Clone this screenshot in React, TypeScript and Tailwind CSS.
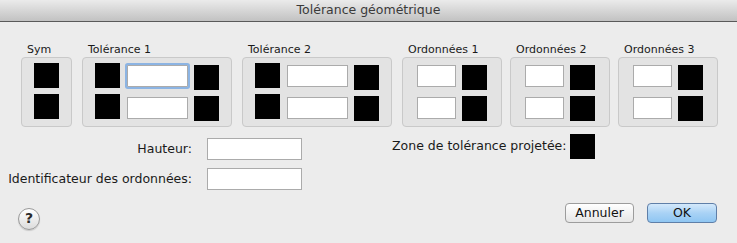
import React from "react"

const font = { fontFamily: '"DejaVu Sans", "Liberation Sans", sans-serif' }

function Swatch({ className = "" }: { className?: string }) {
  return <div className={"w-[25px] h-[25px] bg-black " + className} />
}

function Field({ w, focused = false }: { w: string; focused?: boolean }) {
  return (
    <div
      className={
        "h-[22px] bg-white border border-[#ababab] " +
        w +
        (focused ? " shadow-[0_0_0_2px_#8cb4e3] border-[#7a9cc8] rounded-[1px]" : "")
      }
    />
  )
}

function Group({
  label,
  width,
  children,
}: {
  label: string
  width: string
  children: React.ReactNode
}) {
  return (
    <div className={"flex flex-col " + width}>
      <div className="h-[15px] pl-[6px] text-[11px] leading-[15px] text-[#1a1a1a] whitespace-nowrap">{label}</div>
      <div className="h-[70px] flex bg-[#e3e3e3] border border-[#c9c9c9] rounded-[4px]">
        {children}
      </div>
    </div>
  )
}

function SwatchCol({ pt, className = "" }: { pt: string; className?: string }) {
  return (
    <div className={"flex flex-col gap-[6px] " + pt + " " + className}>
      <Swatch />
      <Swatch />
    </div>
  )
}

function FieldCol({ w, className = "", focusFirst = false }: { w: string; className?: string; focusFirst?: boolean }) {
  return (
    <div className={"flex flex-col gap-[10px] pt-[7px] " + className}>
      <Field w={w} focused={focusFirst} />
      <Field w={w} />
    </div>
  )
}

export default function App() {
  return (
    <div className="w-[737px] h-[243px] bg-[#ececec] flex flex-col overflow-hidden" style={font}>
      <div className="h-[22px] shrink-0 flex items-center justify-center bg-gradient-to-b from-[#ebebeb] to-[#c2c2c2] border-b border-[#5a5a5a] text-[12.5px] text-[#3a3a3a]">
        Tolérance géométrique
      </div>

      <div className="flex pl-[21px] pt-[20px]">
        <Group label="Sym" width="w-[51px]">
          <SwatchCol pt="pt-[5px]" className="ml-[12px]" />
        </Group>
        <div className="w-[10px]" />
        <Group label="Tolérance 1" width="w-[150px]">
          <SwatchCol pt="pt-[5px]" className="ml-[12px]" />
          <FieldCol w="w-[61px]" className="ml-[7px]" focusFirst />
          <SwatchCol pt="pt-[7px]" className="ml-[6px]" />
        </Group>
        <div className="w-[10px]" />
        <Group label="Tolérance 2" width="w-[150px]">
          <SwatchCol pt="pt-[5px]" className="ml-[12px]" />
          <FieldCol w="w-[61px]" className="ml-[7px]" />
          <SwatchCol pt="pt-[7px]" className="ml-[6px]" />
        </Group>
        <div className="w-[10px]" />
        <div className="flex gap-[8px]">
          {["Ordonnées 1", "Ordonnées 2", "Ordonnées 3"].map((l) => (
            <Group key={l} label={l} width="w-[100px]">
              <FieldCol w="w-[39px]" className="ml-[14px]" />
              <SwatchCol pt="pt-[7px]" className="ml-[6px]" />
            </Group>
          ))}
        </div>
      </div>

      <div className="flex pt-[7px]">
        <div className="flex flex-col gap-[8px] pt-[4px]">
          <div className="flex items-center">
            <div className="w-[192px] text-right text-[12.5px] text-[#1a1a1a]">Hauteur:</div>
            <div className="ml-[15px]">
              <Field w="w-[95px]" />
            </div>
          </div>
          <div className="flex items-center">
            <div className="w-[192px] text-right text-[12.5px] text-[#1a1a1a] whitespace-nowrap">
              Identificateur des ordonnées:
            </div>
            <div className="ml-[15px]">
              <Field w="w-[95px]" />
            </div>
          </div>
        </div>
        <div className="flex items-center h-[25px] ml-[90px]">
          <div className="text-[12.5px] text-[#1a1a1a] whitespace-nowrap">Zone de tolérance projetée:</div>
          <Swatch className="ml-[4px]" />
        </div>
      </div>

      <div className="flex items-center pl-[18px] pr-[20px] mt-auto mb-[9px]">
        <div className="w-[22px] h-[22px] rounded-full border border-[#9a9a9a] bg-gradient-to-b from-white to-[#dcdcdc] flex items-center justify-center text-[14px] font-bold text-[#2a2a2a] shadow-[0_1px_1px_rgba(0,0,0,0.15)]">
          ?
        </div>
        <div className="ml-auto mb-[11px] flex gap-[13px]">
          <button className="w-[69px] h-[20px] rounded-[4px] border border-[#9c9c9c] bg-gradient-to-b from-white to-[#e6e6e6] text-[12.5px] text-[#111] leading-none">
            Annuler
          </button>
          <button className="w-[70px] h-[20px] rounded-[4px] border border-[#5f7fa8] bg-gradient-to-b from-[#d4e9fb] via-[#a9d2f5] to-[#8fc6f2] text-[12.5px] text-[#111] leading-none">
            OK
          </button>
        </div>
      </div>
    </div>
  )
}
